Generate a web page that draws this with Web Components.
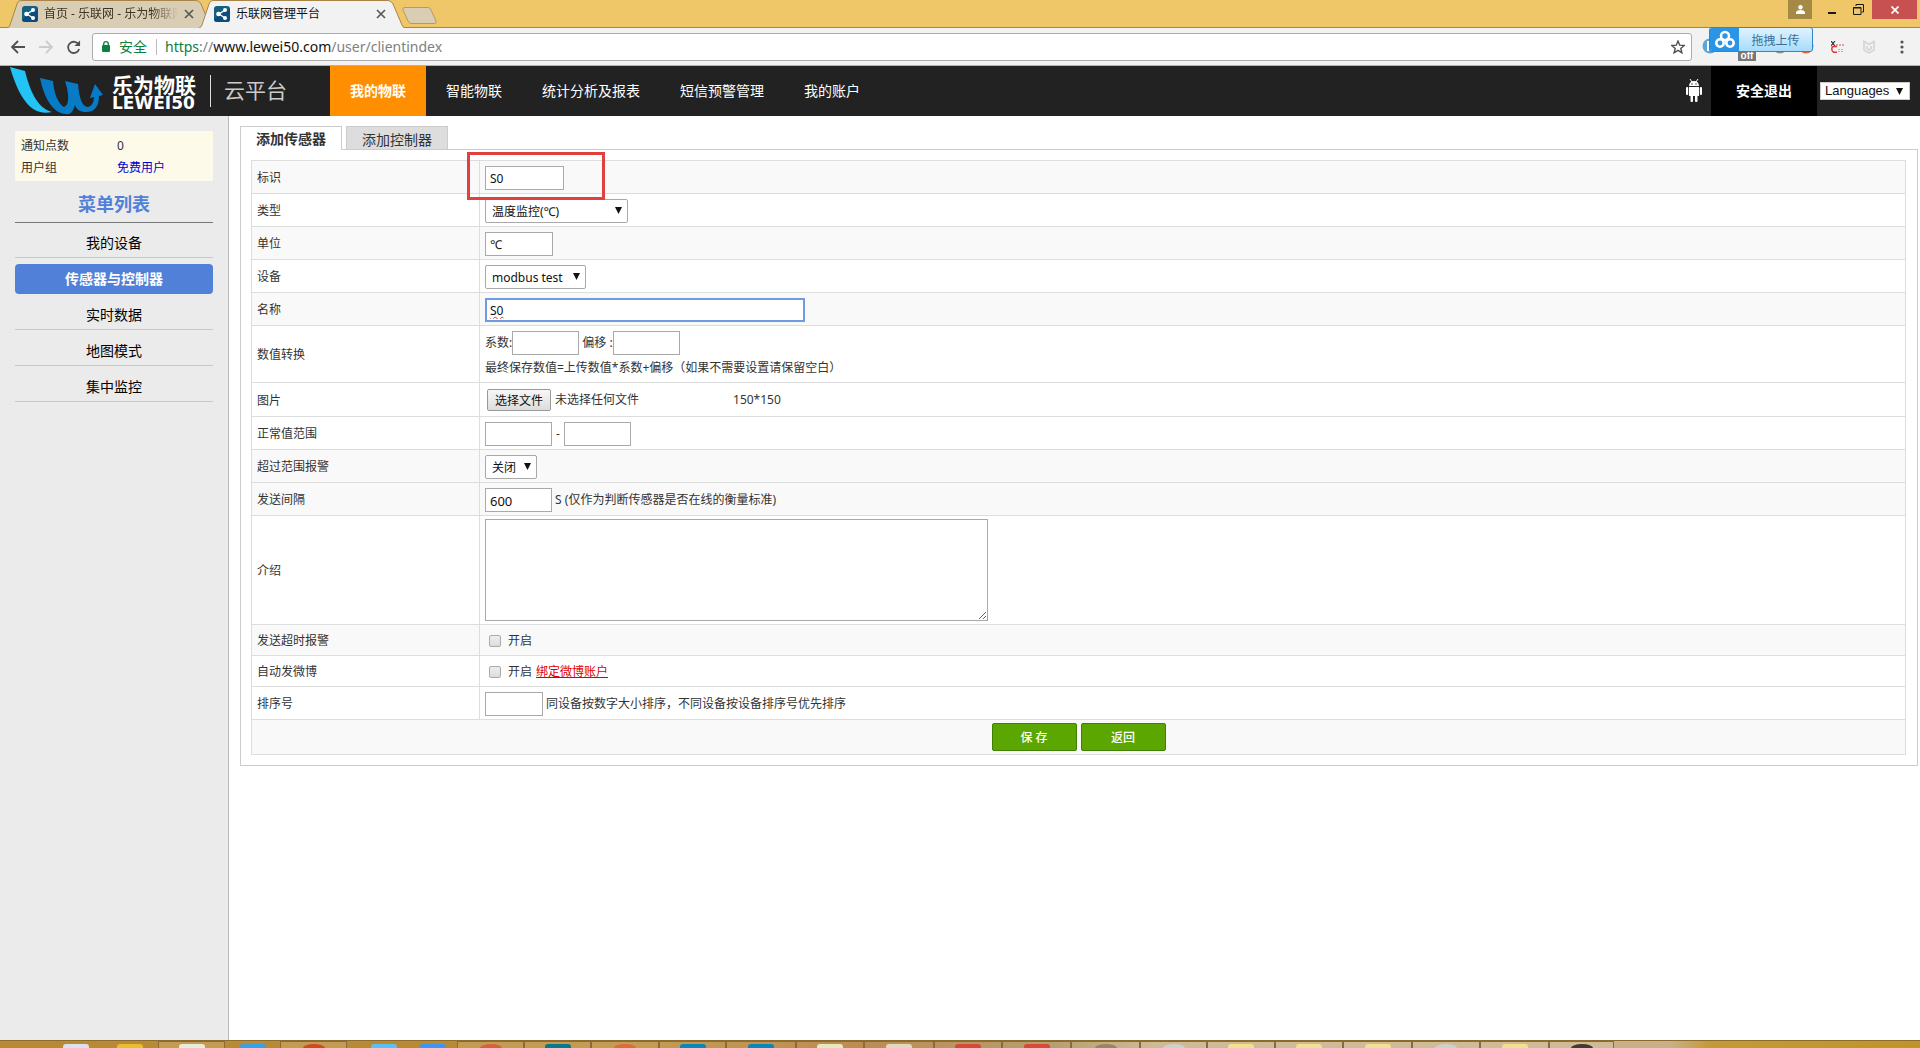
<!DOCTYPE html>
<html lang="zh-CN">
<head>
<meta charset="utf-8">
<title>乐联网管理平台</title>
<style>
  html, body { height: 100%; margin: 0; }
  body { font-family: "Noto Sans", "Noto Sans CJK SC", sans-serif; font-size: 12px; line-height: 18px; color: #333; background: #fff; overflow: hidden; }
</style>
</head>
<body>
<desktop-window>
  <tab-strip slot="chrome"></tab-strip>
  <address-bar slot="chrome"></address-bar>
  <site-header slot="page"></site-header>
  <side-menu slot="side"></side-menu>
  <sensor-panel slot="main"></sensor-panel>
  <task-bar slot="bottom"></task-bar>
</desktop-window>

<script>
function define(name, html, after) {
  customElements.define(name, class extends HTMLElement {
    constructor() {
      super();
      const root = this.attachShadow({ mode: 'open' });
      const t = document.createElement('template');
      t.innerHTML = '<style>:host,*{box-sizing:border-box}</style>' + html;
      root.append(t.content.cloneNode(true));
      if (after) after(root, this);
    }
  });
}

define('desktop-window', `
<style>
  :host { display: flex; flex-direction: column; height: 100vh; }
  main { flex: 1; display: flex; min-height: 0; }
  slot[name=side]::slotted(*) { flex: 0 0 229px; }
  slot[name=main]::slotted(*) { flex: 1; min-width: 0; }
</style>
<slot name="chrome"></slot>
<slot name="page"></slot>
<main><slot name="side"></slot><slot name="main"></slot></main>
<slot name="bottom"></slot>`);

define('browser-tab', `
<style>
  :host { display: block; position: relative; width: 208px; height: 28px; --fill: #d9cdb4; color: #3c3524; }
  :host([active]) { --fill: #f2f2f2; color: #111; z-index: 1; }
  .shape { position: absolute; inset: 0; width: 100%; height: 100%; }
  .row { position: relative; display: flex; align-items: center; height: 28px; padding: 0 20px 0 16px; gap: 6px; }
  .t { flex: 1; overflow: hidden; white-space: nowrap; }
  :host(:not([active])) .t { -webkit-mask-image: linear-gradient(90deg,#000 80%,transparent); }
  button { border: 0; background: none; padding: 0; width: 10px; height: 10px; display: flex; }
</style>
<svg class="shape" viewBox="0 0 208 28" preserveAspectRatio="none"><path d="M0 28.5 Q3 28 4 25 L11 4 Q12 .5 15 .5 H190 Q193 .5 195 4 L204 25 Q205 28 208 28.5Z" fill="var(--fill)" stroke="#a9854a"/></svg>
<div class="row">
  <svg width="16" height="16" viewBox="0 0 16 16"><rect width="16" height="16" rx="3" fill="#156080"/><path d="M0 13 16 3V13a3 3 0 0 1-3 3H3a3 3 0 0 1-3-3Z" fill="#0d4c7d"/><path d="M11 4 5 8l6 4" fill="none" stroke="#fff" stroke-width="1.3"/><circle cx="11" cy="4" r="2" fill="#fff"/><circle cx="4.500" cy="8" r="2.300" fill="#fff"/><circle cx="11" cy="12" r="2" fill="#fff"/></svg>
  <span class="t"><slot></slot></span>
  <button aria-label="关闭标签"><svg width="10" height="10" viewBox="0 0 10 10"><path d="M1 1 9 9M9 1 1 9" stroke="#5a5a5a" stroke-width="1.700"/></svg></button>
</div>`);

define('tab-strip', `
<style>
  :host { display: flex; height: 28px; background: linear-gradient(#efc668 27px,#a9854a 27px); padding-left: 6px; }
  browser-tab + browser-tab { margin-left: -16px; }
  .new { width: 36px; height: 18px; margin: 7px 0 0 -4px; padding: 0; border: 0; background: none; }
  .win { margin-left: auto; display: flex; align-items: flex-start; padding-right: 3px; }
  .win button { border: 0; background: none; height: 19px; padding: 0; display: flex; align-items: center; justify-content: center; }
  .win .user { width: 24px; background: #a58a45; margin-right: 8px; }
  .win .min { width: 24px; } .win .max { width: 28px; }
  .win .close { width: 45px; background: #c75050; }
</style>
<browser-tab>首页 - 乐联网 - 乐为物联网</browser-tab><browser-tab active>乐联网管理平台</browser-tab>
<button class="new" aria-label="新标签"><svg width="36" height="18" viewBox="0 0 36 18"><path d="M3 .5H26Q28 .5 29 3L34 14Q35 16.500 32 16.500H10Q7 16.500 6 14L1 3Q0 .5 3 .5Z" fill="#d9cdb4" stroke="#b89a60"/></svg></button>
<div class="win">
  <button class="user" aria-label="用户"><svg width="9" height="9" viewBox="0 0 9 9"><circle cx="4.500" cy="2.200" r="2.200" fill="#fff"/><path d="M0 9V7Q1 5 4.500 5T9 7V9Z" fill="#fff"/></svg></button>
  <button class="min" aria-label="最小化"><svg width="8" height="8" viewBox="0 0 8 8"><path d="M0 7H8" stroke="#1a1a1a" stroke-width="2"/></svg></button>
  <button class="max" aria-label="还原"><svg width="11" height="11" viewBox="0 0 11 11"><path d="M.5 3.500H8V10.500H.5ZM0 4H8M3 2V.5H10.500V8H9" fill="none" stroke="#1a1a1a"/></svg></button>
  <button class="close" aria-label="关闭"><svg width="8" height="8" viewBox="0 0 8 8"><path d="M.5.5 7.500 7.500M7.500.5.5 7.500" stroke="#fff" stroke-width="1.700"/></svg></button>
</div>`);

define('address-bar', `
<style>
  :host { display: flex; align-items: center; height: 38px; background: #f2f2f2; border-bottom: 1px solid #b4b1b1; padding: 0 12px 0 11px; position: relative; }
  .nav { display: flex; gap: 14px; width: 81px; }
  .nav button { border: 0; background: none; padding: 0; width: 14px; height: 14px; display: flex; }
  .box { flex: 1; display: flex; align-items: center; height: 28px; border: 1px solid #adadad; border-radius: 3px; background: #fff; padding: 0 6px 0 9px; }
  .safe { font-size: 14px; color: #0b8043; padding: 0 9px; border-right: 1px solid #bbb; line-height: 16px; white-space: nowrap; }
  a { flex: 1; margin-left: 8px; font-family: "Noto Sans", sans-serif; font-size: 14px; color: #808080; text-decoration: none; }
  a b { font-weight: 400; color: #111; } a i { font-style: normal; color: #0b8043; }
  .ext { display: flex; align-items: center; justify-content: flex-end; width: 216px; gap: 19px; }
  .up { position: absolute; right: 107px; top: -1px; width: 104px; height: 25px; display: flex; border: 1px solid #2f87c8; border-radius: 3px; padding: 0; overflow: hidden; background: linear-gradient(#e0f3ff,#a6dcfb); color: #3d6f96; font: inherit; font-size: 12px; }
  .up svg { background: #2a95e6; flex: none; } .up span { flex: 1; line-height: 25px; }
  .off { position: absolute; right: 164px; top: 23px; width: 18px; height: 10px; background: #777; color: #fff; font: bold 10px/10px "Liberation Sans", sans-serif; text-align: center; }
  .dots { position: absolute; right: 105px; top: 10px; }
</style>
<div class="nav">
  <button aria-label="后退"><svg width="14" height="14" viewBox="0 0 14 14"><path d="M14 7H1.500M7 1 1 7l6 6" fill="none" stroke="#505050" stroke-width="1.800"/></svg></button>
  <button aria-label="前进"><svg width="14" height="14" viewBox="0 0 14 14"><path d="M0 7H12.500M7 1l6 6-6 6" fill="none" stroke="#ccc" stroke-width="1.800"/></svg></button>
  <button aria-label="刷新"><svg width="15" height="15" viewBox="0 0 15 15"><path d="M12.500 4.500A6 6 0 1 0 13 9" fill="none" stroke="#505050" stroke-width="1.900"/><path d="M14 0V6H8Z" fill="#505050"/></svg></button>
</div>
<div class="box">
  <svg width="8" height="11" viewBox="0 0 8 11"><rect y="4" width="8" height="7" rx="1" fill="#0b8043"/><path d="M1.700 5V3a2.300 2.300 0 0 1 4.600 0V5" fill="none" stroke="#0b8043" stroke-width="1.300"/></svg>
  <span class="safe">安全</span>
  <a href="#"><i>https</i>://<b>www.lewei50.com</b>/user/clientindex</a>
  <svg width="14" height="14" viewBox="0 0 14 14"><path d="M7 1 8.700 5.200 13.300 5.500 9.800 8.400 10.900 12.800 7 10.400 3.100 12.800 4.200 8.400.7 5.500 5.300 5.200Z" fill="none" stroke="#505050" stroke-width="1.400"/></svg>
</div>
<div class="ext">
  <svg width="13" height="12" viewBox="0 0 13 12"><path d="M0 0 4 5M4 0 0 5" stroke="#333" stroke-width="1.200"/><path d="M6 5.500H2.500Q.8 5.500.8 8T2.500 11.300H6" fill="none" stroke="#e03838" stroke-width="1.500"/><path d="M5 4H13" stroke="#c06060" stroke-dasharray="2 1"/><path d="M7 8.500H13M7 10.500H12" stroke="#e8a0a0" stroke-dasharray="2 1"/></svg>
  <svg width="12" height="14" viewBox="0 0 12 14"><path d="M1 1.500 6 4.500 11 1.500V10L6 13 1 10ZM3.800 6V8.500L6 10 8.200 8.500V6" fill="none" stroke="#d6d6d6" stroke-width="1.800"/></svg>
  <svg width="14" height="14" viewBox="0 0 14 14"><g fill="#555"><circle cx="8" cy="2" r="1.600"/><circle cx="8" cy="7" r="1.600"/><circle cx="8" cy="12" r="1.600"/></g></svg>
</div>
<svg class="dots" width="113" height="16" viewBox="0 0 113 16"><circle cx="8" cy="8" r="7.500" fill="#58a9d8"/><path d="M6 3V13" stroke="#fff" stroke-width="2"/><circle cx="78" cy="8" r="7.500" fill="#8c9498"/><circle cx="104" cy="8" r="7.500" fill="#e8603c"/></svg>
<span class="off">off</span>
<button class="up"><svg width="29" height="24" viewBox="0 0 29 24"><g fill="none" stroke="#fff" stroke-width="2.600"><circle cx="15" cy="8" r="4"/><circle cx="10" cy="15" r="3.700"/><circle cx="20" cy="15" r="3.700"/></g></svg><span>拖拽上传</span></button>`);

define('site-header', `
<style>
  :host { display: flex; height: 50px; background: #222; color: #fff; padding-right: 10px; font-size: 14px; }
  .brand { display: flex; width: 330px; padding-left: 10px; align-items: center; }
  .name { margin-left: 8px; width: 88px; font-weight: 700; font-size: 21px; line-height: 21px; white-space: nowrap; padding-top: 2px; }
  .name small { display: block; font: bold 17px/14px "DejaVu Sans", sans-serif; }
  .sub { border-left: 1px solid #ddd; height: 32px; line-height: 30px; margin-left: 10px; padding-left: 13px; font-size: 21px; color: #ccc; }
  nav { display: flex; flex: 1; }
  a { color: #fff; text-decoration: none; padding: 0 20px; line-height: 50px; white-space: nowrap; }
  .on { background: #ff8f00; font-weight: 700; }
  .bot { margin: 12px 9px 0 0; }
  .exit { background: #000; padding: 0 25px; font-weight: 700; }
  .lang { display: grid; align-self: center; align-items: center; margin-left: 3px; }
  .lang > * { grid-area: 1/1; }
  select { appearance: none; width: 90px; height: 18px; padding: 0 4px; border: 1px solid #ccc; border-radius: 0; background: #fff; color: #111; font: 13px/16px "Liberation Sans", sans-serif; }
  .lang svg { justify-self: end; margin-right: 7px; pointer-events: none; }
</style>
<div class="brand">
  <svg width="94" height="48" viewBox="0 0 94 48"><path d="M0 0 15 4C19 20 26 41 42 45C20 50 8 28 0 0Z" fill="#22c4f5"/><path d="M30 11 43 14C44 26 48 37 54 40C60 38 59 26 55 14L68 17C69 30 72 40 78 40C82 39 84 35 84 30L80 31 85 17 93 28 89 29C89 39 85 45 76 45C70 45 67 43 65 38C63 44 61 48 56 47C42 46 34 30 30 11Z" fill="#087bc6"/></svg>
  <div class="name">乐为物联<small>LEWEI50</small></div>
  <div class="sub">云平台</div>
</div>
<nav><a class="on" href="#">我的物联</a><a href="#">智能物联</a><a href="#">统计分析及报表</a><a href="#">短信预警管理</a><a href="#">我的账户</a></nav>
<svg class="bot" width="16" height="25" viewBox="0 0 16 25"><g fill="#fff"><path d="M3 8Q3.500 3 8 3T13 8Z"/><path d="M3 9H13V18H3Z"/><rect y="9" width="2.200" height="8" rx="1"/><rect x="13.800" y="9" width="2.200" height="8" rx="1"/><rect x="4.500" y="17" width="2.500" height="7" rx="1"/><rect x="9" y="17" width="2.500" height="7" rx="1"/></g><path d="M4 1 6 4M12 1 10 4" stroke="#fff"/><circle cx="6" cy="6" r=".7" fill="#222"/><circle cx="10" cy="6" r=".7" fill="#222"/></svg>
<a class="exit" href="#">安全退出</a>
<div class="lang"><select aria-label="Languages"><option>Languages</option></select><svg width="7" height="7" viewBox="0 0 7 7"><path d="M0 0H7L3.500 7Z" fill="#111"/></svg></div>`);

define('side-menu', `
<style>
  :host { display: block; background: #ebebeb; border-right: 1px solid #bbb; padding: 15px 15px 0; }
  dl { display: grid; grid-template-columns: 96px 1fr; row-gap: 4px; margin: 0; padding: 6px 6px 4px; background: #fdfaea; height: 50px; }
  dt, dd { margin: 0; }
  dd a { color: #00c; text-decoration: none; }
  h2 { margin: 0 0 5px; height: 42px; line-height: 46px; font-size: 18px; text-align: center; color: #5080d8; border-bottom: 1px solid #777; }
  nav { display: flex; flex-direction: column; gap: 6px; }
  a.i { height: 30px; line-height: 29px; text-align: center; font-size: 14px; color: #000; text-decoration: none; border-bottom: 1px solid #c8c8c8; }
  a.i.on { background: #5080d8; color: #fff; font-weight: 700; border: 0; border-radius: 4px; line-height: 30px; }
</style>
<dl><dt>通知点数</dt><dd>0</dd><dt>用户组</dt><dd><a href="#">免费用户</a></dd></dl>
<h2>菜单列表</h2>
<nav><a class="i" href="#">我的设备</a><a class="i on" href="#">传感器与控制器</a><a class="i" href="#">实时数据</a><a class="i" href="#">地图模式</a><a class="i" href="#">集中监控</a></nav>`);

define('form-row', `
<style>
  :host { display: flex; border-bottom: 1px solid #ddd; min-height: 33px; background: #fff; }
  :host([shade]) { background: #f9f9f9; }
  .l { width: 228px; flex: none; border-right: 1px solid #ddd; padding: 2px 5px 0; display: flex; align-items: center; }
  .c { flex: 1; padding: 5px 5px 3px; display: flex; align-items: flex-start; align-content: flex-start; position: relative; }
  :host([check]) { min-height: 31px; }
  :host([check]) .c { padding: 2px 9px 0; align-items: center; }
</style>
<div class="l"><slot name="label"></slot></div><div class="c"><slot></slot></div>`);

define('pick-list', `
<style>
  :host { display: grid; align-items: center; }
  ::slotted(select) { grid-area: 1/1; }
  svg { grid-area: 1/1; justify-self: end; margin-right: 6px; margin-bottom: 2px; pointer-events: none; }
</style>
<slot></slot><svg width="7" height="7" viewBox="0 0 7 7"><path d="M0 0H7L3.500 7Z" fill="#111"/></svg>`);

define('sensor-panel', `
<style>
  :host { display: block; padding: 10px 2px 0 11px; }
  .tabs { display: flex; gap: 4px; }
  .tabs button { height: 23px; width: 102px; border: 1px solid #ccc; border-bottom: 0; background: #ddd; font: inherit; font-size: 14px; line-height: 22px; color: #333; padding: 2px 0 0; }
  .tabs .on { height: 24px; margin-bottom: -1px; background: #fff; font-weight: 700; position: relative; padding: 1px 0 0; }
  .panel { border: 1px solid #ccc; padding: 10px 11px 10px 10px; }
  form { border: 1px solid #ddd; border-bottom: 0; }
  input[type=text], textarea { border: 1px solid #a9a9a9; background: #fff; color: #111; font: inherit; padding: 1px 4px 0; margin: 0; border-radius: 0; display: block; outline: 0; }
  input[type=text] { height: 24px; width: 67px; }
  #sid { width: 79px; } #unit { width: 68px; }
  #name { width: 320px; max-width: 100%; border: 2px solid #6f9be0; padding: 1px 3px 0; text-decoration: underline wavy #e03030 1px; }
  #order { width: 58px; }
  #gap { font-size: 13px; }
  select { appearance: none; height: 24px; border: 1px solid #a9a9a9; border-radius: 2px; background: #fff; color: #111; font: inherit; padding: 1px 6px 0; }
  #type { width: 143px; } #dev { width: 101px; } #alarm { width: 52px; }
  textarea { width: 503px; height: 102px; margin-top: -2px; }
  .s { line-height: 23px; white-space: pre; }
  .dash { padding: 0 1px; }
  .mark { position: absolute; left: -13px; top: -9px; width: 138px; height: 48px; border: 3px solid #e04040; z-index: 1; pointer-events: none; }
  .conv { display: flex; flex-direction: column; gap: 1px; }
  .line { display: flex; align-items: flex-start; height: 24px; }
  .file { display: block; width: 64px; height: 22px; border: 1px solid #999; border-radius: 2px; background: linear-gradient(#f7f7f7,#dcdcdc); color: #111; text-align: center; line-height: 21px; margin: 1px 4px 2px 2px; }
  input[type=file] { position: absolute; opacity: 0; width: 1px; height: 1px; }
  .size { margin-left: 94px; }
  input[type=checkbox] { appearance: none; width: 12px; height: 12px; margin: 0 7px 0 0; border: 1px solid #aaa; border-radius: 2px; background: linear-gradient(#eee,#dcdcdc); }
  .red { color: #d00; margin-left: 4px; }
  .acts { display: flex; justify-content: center; gap: 4px; height: 35px; padding-top: 3px; background: #f9f9f9; border-bottom: 1px solid #ddd; }
  .acts button { width: 85px; height: 28px; border: 1px solid #3f8000; border-radius: 2px; background: #5ba600; color: #fff; font: inherit; font-weight: 500; padding: 2px 0 0; }
</style>
<div class="tabs"><button class="on">添加传感器</button><button>添加控制器</button></div>
<div class="panel"><form>
  <form-row shade><label slot="label" for="sid">标识</label><input type="text" id="sid" value="S0"><span class="mark"></span></form-row>
  <form-row><label slot="label" for="type">类型</label><pick-list><select id="type"><option>温度监控(℃)</option></select></pick-list></form-row>
  <form-row shade><label slot="label" for="unit">单位</label><input type="text" id="unit" value="℃"></form-row>
  <form-row><label slot="label" for="dev">设备</label><pick-list><select id="dev"><option>modbus test</option></select></pick-list></form-row>
  <form-row shade><label slot="label" for="name">名称</label><input type="text" id="name" value="S0" spellcheck="false"></form-row>
  <form-row><span slot="label">数值转换</span><div class="conv"><div class="line"><label class="s" for="k">系数:</label><input type="text" id="k"><label class="s" for="b"> 偏移 :</label><input type="text" id="b"></div><div class="s">最终保存数值=上传数值*系数+偏移（如果不需要设置请保留空白）</div></div></form-row>
  <form-row><span slot="label">图片</span><label class="file" for="pic">选择文件</label><input type="file" id="pic"><span class="s">未选择任何文件</span><span class="s size">150*150</span></form-row>
  <form-row><label slot="label" for="lo">正常值范围</label><input type="text" id="lo"><span class="s dash"> - </span><input type="text" id="hi" aria-label="上限"></form-row>
  <form-row shade><label slot="label" for="alarm">超过范围报警</label><pick-list><select id="alarm"><option>关闭</option></select></pick-list></form-row>
  <form-row shade><label slot="label" for="gap">发送间隔</label><input type="text" id="gap" value="600"><span class="s"> S (仅作为判断传感器是否在线的衡量标准)</span></form-row>
  <form-row><label slot="label" for="intro">介绍</label><textarea id="intro"></textarea></form-row>
  <form-row check shade><span slot="label">发送超时报警</span><input type="checkbox" id="c1"><label for="c1">开启</label></form-row>
  <form-row check><span slot="label">自动发微博</span><input type="checkbox" id="c2"><label for="c2">开启</label><a class="red" href="#">绑定微博账户</a></form-row>
  <form-row><label slot="label" for="order">排序号</label><input type="text" id="order"><span class="s"> 同设备按数字大小排序，不同设备按设备排序号优先排序</span></form-row>
  <div class="acts"><button type="button">保 存</button><button type="button">返回</button></div>
</form></div>`);

define('task-bar', `
<style>
  :host { display: flex; height: 8px; overflow: hidden; background: linear-gradient(90deg,#b98a34 0,#b98a34 34%,#b07838 45%,#a89058 55%,#c5ae84 60%,#c8b088 87%,#c49a38 89%,#bf9428 100%); border-top: 1px solid #8d6b2c; }
  span { flex: none; display: flex; justify-content: center; padding-top: 3px; height: 8px; }
  .b { border: 1px solid #8b6a3a; border-bottom: 0; background: #ffffff26; padding-top: 2px; }
  i { width: 26px; height: 8px; border-radius: 3px 3px 0 0; }
  i.r { border-radius: 50% 50% 0 0; width: 22px; }
</style>`, root => {
  // slot width, boxed window button, icon colour, round icon
  const items = [[50,0,''],[52,0,'#dde0f0'],[56,0,'#e8bd30'],[67,1,'#e4f0dc'],[55,0,'#38a0e8'],[67,1,'#d04a20','r'],[12,0,''],[50,0,'#5cc0f8'],[48,0,'#3c96f8'],[67,1,'#d8603c','r'],[67,1,'#08788c'],[68,1,'#dc6a3c','r'],[67,1,'#0b86b8'],[70,1,'#0b86b8'],[68,1,'#e8e8c0'],[70,1,'#e4d6c0'],[68,1,'#d84a38'],[69,1,'#d84a38'],[69,1,'#9a8468','r'],[67,1,'#cdd0cc','r'],[68,1,'#f0e090'],[68,1,'#f0e090'],[69,1,'#f0e090'],[68,1,'#cdd0cc','r'],[69,1,'#f0e090'],[65,1,'#443c30','r']];
  for (const [w, box, color, round] of items) {
    const s = document.createElement('span');
    s.style.width = w + 'px';
    if (box) s.className = 'b';
    if (color) {
      const i = document.createElement('i');
      i.style.background = color;
      if (round) i.className = 'r';
      s.append(i);
    }
    root.append(s);
  }
});
</script>
</body>
</html>
